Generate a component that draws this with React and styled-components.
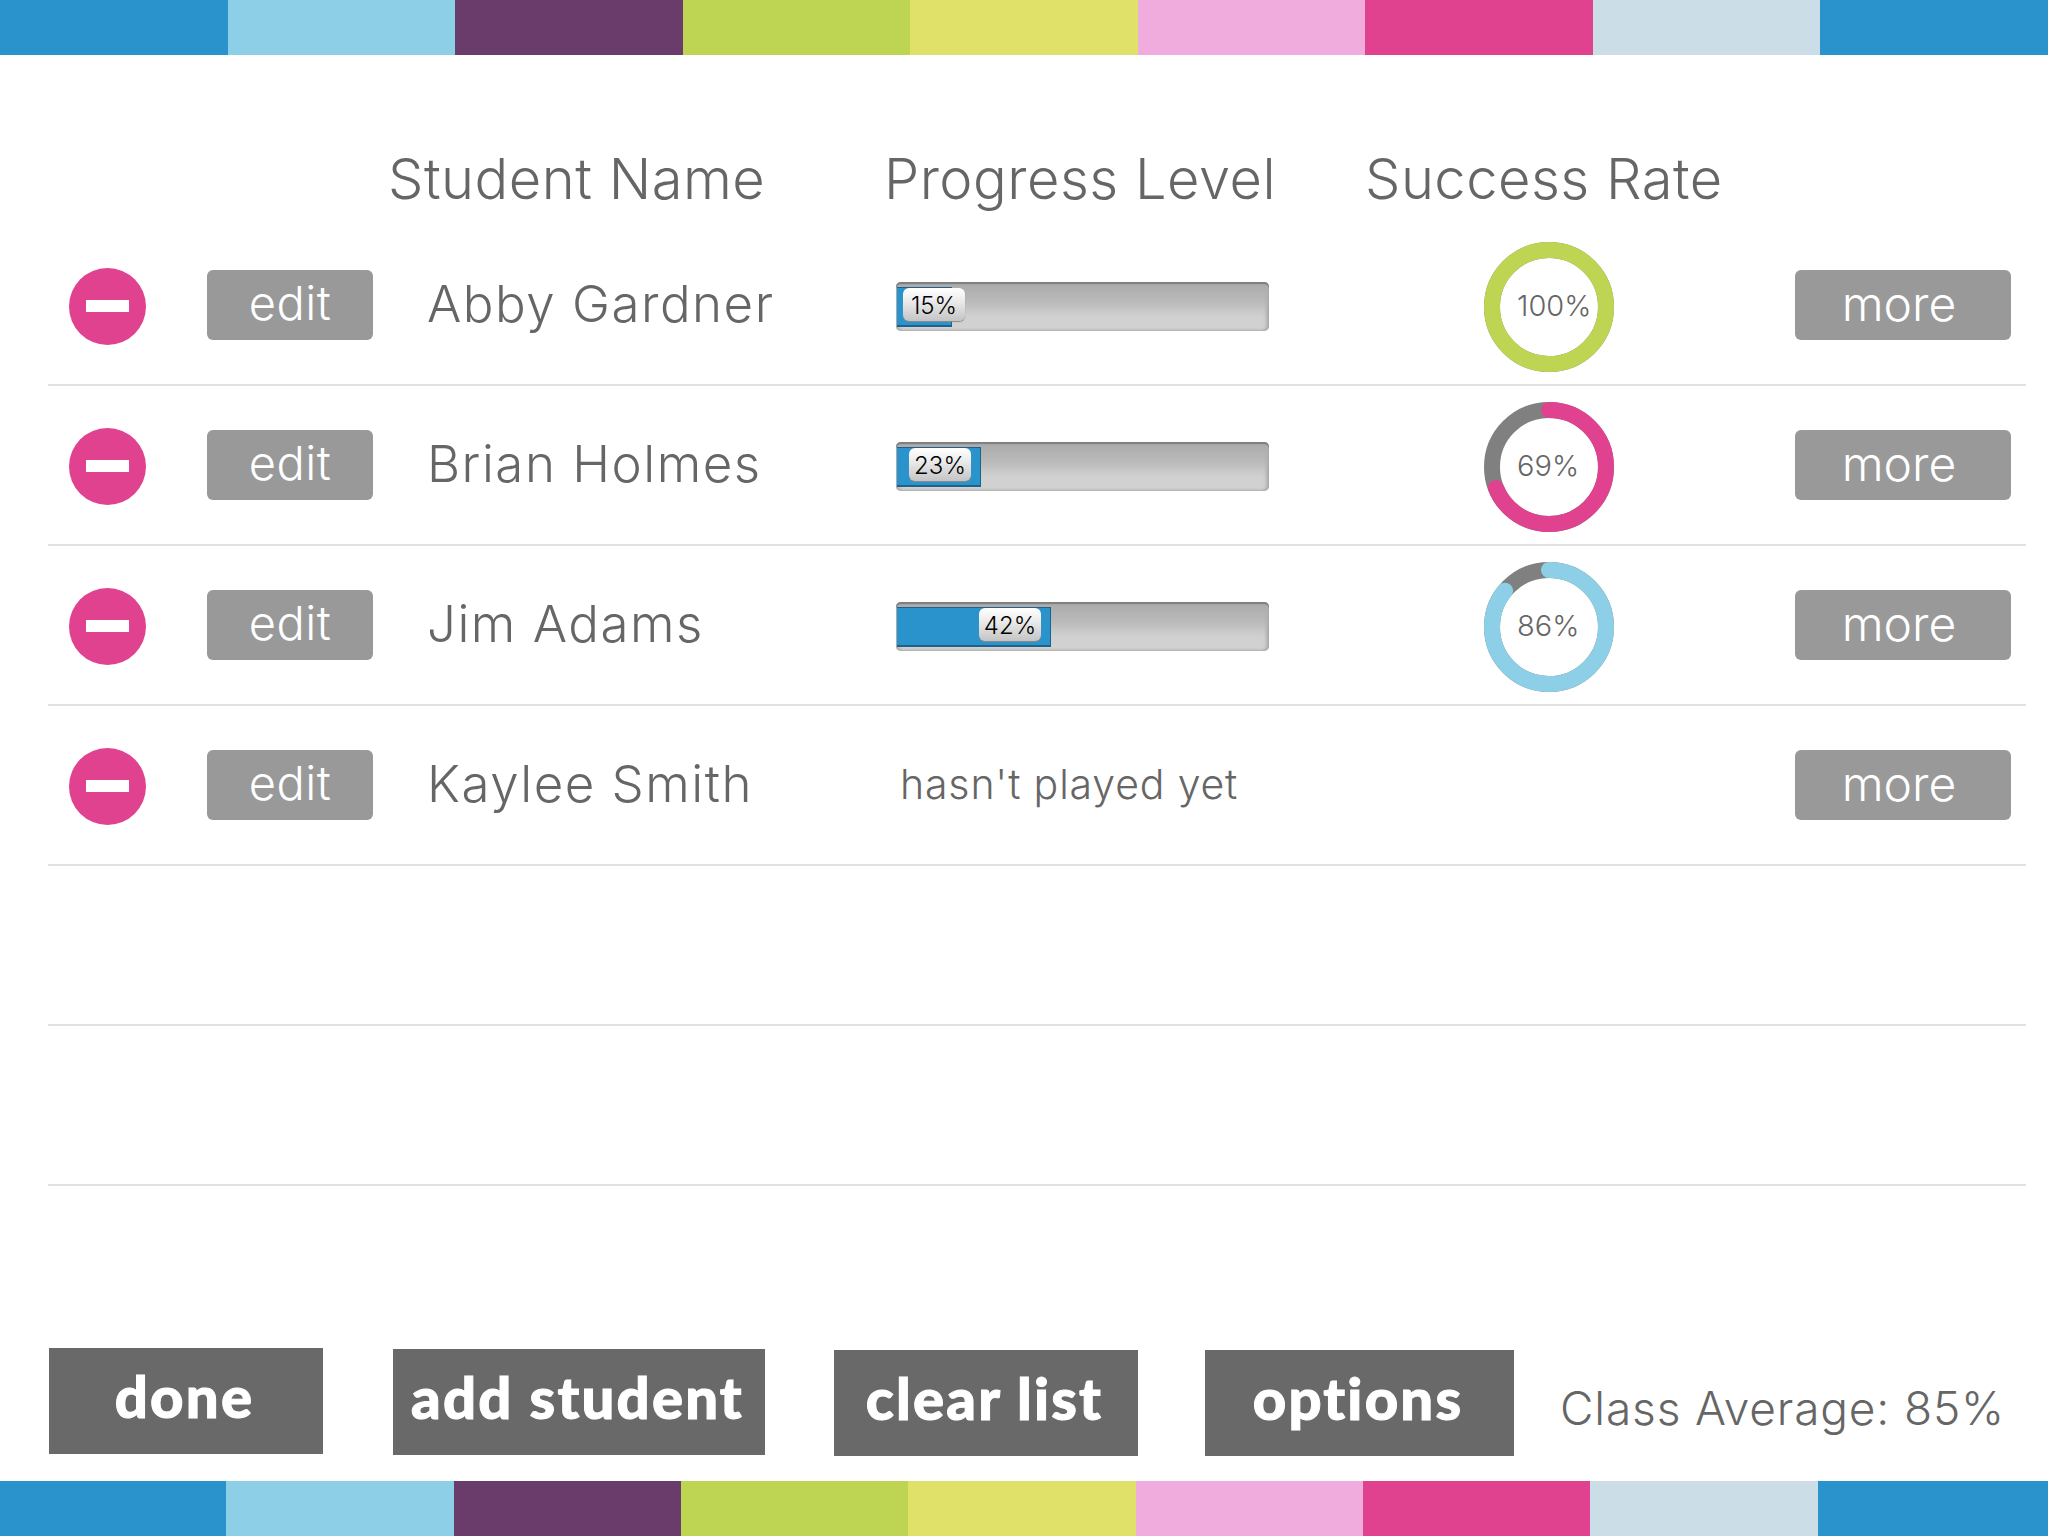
import React from "react";
import styled, { createGlobalStyle } from "styled-components";

const Global = createGlobalStyle`
  html, body { margin: 0; padding: 0; background: #fff; }
  body { font-family: "Inter", "Lato", sans-serif; color: #666; }
`;

const Page = styled.div`
  width: 2048px; height: 1536px; display: flex; flex-direction: column; overflow: hidden; background: #fff;
`;
const Stripes = styled.div`
  display: grid; height: 55px; flex: none;
  grid-template-columns: ${p => (p.$bottom ? "repeat(8, 227.35px) 1fr" : "repeat(9, 1fr)")};
  margin-left: ${p => (p.$bottom ? "-1px" : "0")};
`;
const Stripe = styled.div`background: ${p => p.$c};`;

const Header = styled.div`
  height: 171px; flex: none; box-sizing: border-box; display: grid;
  grid-template-columns: 496px 481px 1fr; padding: 90px 0 0 388px;
`;
const HeaderCell = styled.div`
  font-size: 56px; font-weight: 300; line-height: 68px; color: #666; white-space: nowrap; letter-spacing: 0.5px;
`;

const List = styled.div`margin: 0 22px 0 48px; flex: none;`;
const Row = styled.div`
  height: 160px; box-sizing: border-box; border-bottom: 2px solid #e1e1e1; display: grid;
  grid-template-columns: 159px 221px 468px 588px 311px 1fr; align-items: center;
`;
const RemoveCell = styled.div`padding: 2px 0 0 21px; display: flex;`;
const Remove = styled.button`
  width: 77px; height: 77px; border: 0; padding: 0; border-radius: 50%; background: #e0428f;
  display: flex; align-items: center; justify-content: center;
`;
const RemoveBar = styled.span`display: block; width: 43px; height: 12px; background: #fff;`;
const SoftButton = styled.button`
  border: 0; padding: 0 ${p => p.$shift}px ${p => p.$lift}px 0; background: #999; color: #fff; border-radius: 6px; height: 70px; width: ${p => p.$w}px;
  font: 300 ${p => p.$fs}px/66px "Inter", sans-serif; text-align: center; letter-spacing: ${p => p.$ls}px;
`;
const Name = styled.div`
  font-size: 51px; font-weight: 300; color: #666; white-space: nowrap; letter-spacing: 1.5px; padding-bottom: 3px; margin-left: -1px;
`;
const Pending = styled.div`
  font-size: 41px; font-weight: 300; color: #666; padding: 0 0 2px 4px; white-space: nowrap; letter-spacing: 0.85px;
`;

const Track = styled.div`
  position: relative; width: 373px; height: 49px; box-sizing: border-box; border-radius: 5px; margin-top: 2px;
  background: linear-gradient(#a9a9a9 0%, #bababa 40%, #d0d0d0 70%, #d2d2d2 100%);
  box-shadow: inset 0 2px 1px #7e7e7e, inset 3px 0 3px #b0b0b0, inset -3px 0 3px #b0b0b0, inset 0 -1px 2px #bcbcbc;
`;
const Fill = styled.div`
  position: absolute; left: 1px; top: 5px; height: 40px; box-sizing: border-box; background: #2a93cc;
  border-top: 1px solid #20618a; border-bottom: 2px solid #20618a; border-right: 1px solid #20618a;
`;
const Thumb = styled.div`
  position: absolute; top: 6px; height: 33px; width: 62px; border-radius: 6px;
  background: linear-gradient(#ffffff 0%, #eeeeee 35%, #c4c4c4 100%);
  box-shadow: 0 1px 1px #8a8a8a;
  color: #000; font-size: 24px; font-weight: 300; line-height: 35px; text-align: center;
`;

const RingBox = styled.div`position: relative; width: 130px; height: 130px; margin-top: 3px;`;
const RingLabel = styled.span`
  position: absolute; left: 33px; top: -1px; line-height: 130px; font-size: 29px; font-weight: 300; color: #666;
`;

const Footer = styled.div`flex: 1; display: flex; align-items: flex-start; padding: 162px 0 0 49px;`;
const BigButton = styled.button`
  flex: none; border: 0; padding: 0 3px 10px 0; height: 106px; background: #696969; color: #fff;
  width: ${p => p.$w}px; margin-left: ${p => p.$ml}px; margin-top: ${p => p.$mt}px;
  font: 900 58px/80px "Lato", sans-serif; text-align: center; letter-spacing: 2.2px;
  -webkit-text-stroke: 1px #fff;
`;
const Average = styled.div`
  margin: 30px 0 0 46px; font-size: 46px; font-weight: 300; line-height: 60px; color: #666; white-space: nowrap; letter-spacing: 0.85px;
`;

const colors = ["#2a93cc", "#8ccfe7", "#693c6b", "#bed553", "#e0e169", "#efacdc", "#e0428f", "#cbdde6", "#2a93cc"];

const Ring = ({ value, color }) => (
  <RingBox>
    <svg width="130" height="130" viewBox="0 0 130 130">
      <circle cx="65" cy="65" r="57" fill="none" stroke="#808080" strokeWidth="16" />
      <circle
        cx="65" cy="65" r="57" fill="none" stroke={color} strokeWidth="16"
        strokeLinecap={value < 100 ? "round" : "butt"}
        pathLength="100" strokeDasharray={`${value} 100`} transform="rotate(-90 65 65)"
      />
    </svg>
    <RingLabel>{value}%</RingLabel>
  </RingBox>
);

const Progress = ({ value, fill, thumb }) => (
  <Track>
    <Fill style={{ width: fill }} />
    <Thumb style={{ left: thumb }}>{value}%</Thumb>
  </Track>
);

const students = [
  { name: "Abby Gardner", progress: 15, fill: 55, thumb: 7, rate: 100, color: "#bed553" },
  { name: "Brian Holmes", progress: 23, fill: 84, thumb: 13, rate: 69, color: "#e0428f" },
  { name: "Jim Adams", progress: 42, fill: 154, thumb: 83, rate: 86, color: "#8ccfe7" },
  { name: "Kaylee Smith" },
];

export default function App() {
  const rows = [0, 1, 2, 3, 4, 5].map(i => students[i]);
  return (
    <Page>
      <Global />
      <Stripes>{colors.map((c, i) => <Stripe key={i} $c={c} />)}</Stripes>
      <Header>
        <HeaderCell>Student Name</HeaderCell>
        <HeaderCell>Progress Level</HeaderCell>
        <HeaderCell>Success Rate</HeaderCell>
      </Header>
      <List>
        {rows.map((s, i) => (
          <Row key={i}>
            {s && (
              <>
                <RemoveCell><Remove aria-label="remove"><RemoveBar /></Remove></RemoveCell>
                <SoftButton $w={166} $fs={47} $ls={0.5} $shift={0} $lift={4}>edit</SoftButton>
                <Name>{s.name}</Name>
                {s.progress ? (
                  <Progress value={s.progress} fill={s.fill} thumb={s.thumb} />
                ) : (
                  <Pending>hasn't played yet</Pending>
                )}
                {s.rate ? <Ring value={s.rate} color={s.color} /> : <div />}
                <SoftButton $w={216} $fs={48} $ls={0} $shift={8} $lift={2}>more</SoftButton>
              </>
            )}
          </Row>
        ))}
      </List>
      <Footer>
        <BigButton $w={274} $ml={0} $mt={0}>done</BigButton>
        <BigButton $w={372} $ml={70} $mt={1}>add student</BigButton>
        <BigButton $w={304} $ml={69} $mt={2}>clear list</BigButton>
        <BigButton $w={309} $ml={67} $mt={2}>options</BigButton>
        <Average>Class Average: 85%</Average>
      </Footer>
      <Stripes $bottom>{colors.map((c, i) => <Stripe key={i} $c={c} />)}</Stripes>
    </Page>
  );
}
